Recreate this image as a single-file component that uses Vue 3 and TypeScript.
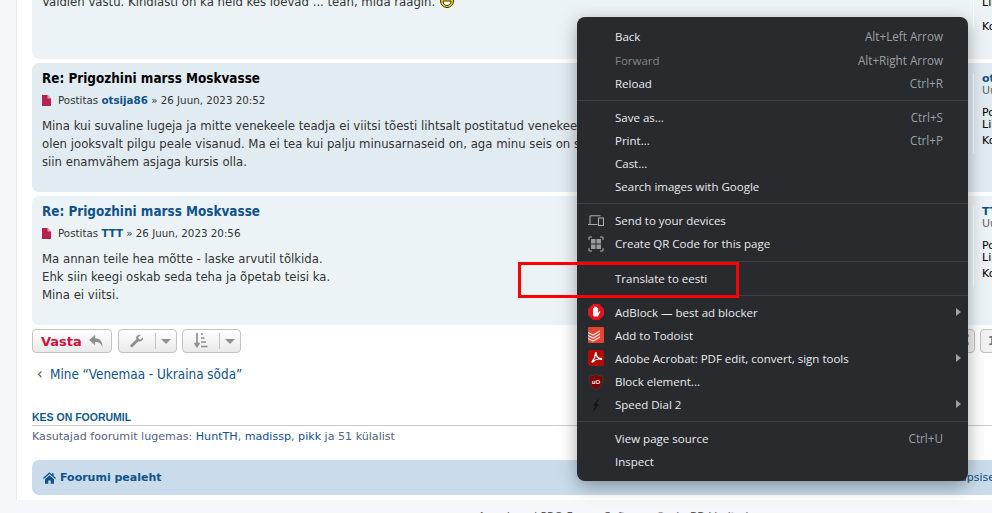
<script setup lang="ts">
interface Post { title: string; author: string; date: string; lines: string[]; dark: boolean; titleClass: string; rankName: string }
const posts: Post[] = [
  { title: 'Re: Prigozhini marss Moskvasse', author: 'otsija86', date: '26 Juun, 2023 20:52', dark: true, titleClass: 'black', rankName: 'otsija86',
    lines: ['Mina kui suvaline lugeja ja mitte venekeele teadja ei viitsi tõesti lihtsalt postitatud venekeelseid tekste lugeda, vaid', 'olen jooksvalt pilgu peale visanud. Ma ei tea kui palju minusarnaseid on, aga minu seis on selline, et mul on raske', 'siin enamvähem asjaga kursis olla.'] },
  { title: 'Re: Prigozhini marss Moskvasse', author: 'TTT', date: '26 Juun, 2023 20:56', dark: false, titleClass: 'blue', rankName: 'TTT',
    lines: ['Ma annan teile hea mõtte - laske arvutil tõlkida.', 'Ehk siin keegi oskab seda teha ja õpetab teisi ka.', 'Mina ei viitsi.'] },
]
interface Item { label?: string; key?: string; icon?: string; arrow?: boolean; disabled?: boolean; sep?: boolean }
const menu: Item[] = [
  { label: 'Back', key: 'Alt+Left Arrow' },
  { label: 'Forward', key: 'Alt+Right Arrow', disabled: true },
  { label: 'Reload', key: 'Ctrl+R' },
  { sep: true },
  { label: 'Save as...', key: 'Ctrl+S' },
  { label: 'Print...', key: 'Ctrl+P' },
  { label: 'Cast...' },
  { label: 'Search images with Google' },
  { sep: true },
  { label: 'Send to your devices', icon: 'devices' },
  { label: 'Create QR Code for this page', icon: 'qr' },
  { sep: true },
  { label: 'Translate to eesti' },
  { sep: true },
  { label: 'AdBlock — best ad blocker', icon: 'adblock', arrow: true },
  { label: 'Add to Todoist', icon: 'todoist' },
  { label: 'Adobe Acrobat: PDF edit, convert, sign tools', icon: 'acrobat', arrow: true },
  { label: 'Block element...', icon: 'ublock' },
  { label: 'Speed Dial 2', icon: 'speed', arrow: true },
  { sep: true },
  { label: 'View page source', key: 'Ctrl+U' },
  { label: 'Inspect' },
]
</script>

<template>
  <div class="page">
    <div class="wrap">
      <article class="post first">
        <div class="post-main">
          <p class="body-line">Valdlen vastu. Kindlasti on ka neid kes loevad ... tean, mida räägin.
            <svg class="smile" viewBox="0 0 16 16"><circle cx="8" cy="8" r="6.5" fill="#f6d32d" stroke="#3a3000"/><path d="M4 8h8c0 3-2 4.5-4 4.5S4 11 4 8z" fill="#fff" stroke="#3a3000"/></svg>
          </p>
        </div>
        <aside class="profile">
          <div class="pf">Lii</div>
          <div class="pf ko">Ko</div>
        </aside>
      </article>

      <article v-for="p in posts" :key="p.author" class="post" :class="{ dark: p.dark }">
        <div class="post-main">
          <h3 :class="p.titleClass">{{ p.title }}</h3>
          <div class="meta">
            <svg class="file" viewBox="0 0 9 11"><path d="M0 0h5.500L9 3.500V11H0z" fill="#b5234d"/><path d="M5.500 0v3.500H9z" fill="#e8a0b4"/></svg>
            <span>Postitas <b>{{ p.author }}</b> » {{ p.date }}</span>
          </div>
          <p v-for="l in p.lines" :key="l" class="body-line">{{ l }}</p>
        </div>
        <aside class="profile">
          <div class="pf name">{{ p.rankName }}</div>
          <div class="pf rank">Uu</div>
          <div class="pf po">Po</div>
          <div class="pf lii">Lii</div>
          <div class="pf ko">Ko</div>
        </aside>
      </article>

      <div class="actions">
        <div class="btn reply">
          <span>Vasta</span>
          <svg viewBox="0 0 16 14" width="15" height="13"><path d="M6.500 0 0 5.500 6.500 11V7.600c4 0 6.400 1 7.800 5.400.6-5.600-2.200-9.200-7.800-9.600z" fill="#8f8f8f"/></svg>
        </div>
        <div class="btn tool">
          <svg viewBox="0 0 14 14" width="14" height="14"><path d="M13 3.200 10.600 5.400 8.800 5 8.400 3.200 10.700 1C8.800.3 6.600 1.300 6.200 3.300c-.1.700 0 1.300.2 1.900L1 10.600c-.8.800-.8 1.600-.2 2.200s1.500.6 2.200-.1l5.400-5.400c2.600.7 5.400-1.400 4.600-4.100z" fill="#8f8f8f"/></svg>
          <i class="div"></i><i class="caret"></i>
        </div>
        <div class="btn tool">
          <svg viewBox="0 0 14 16" width="14" height="16"><path d="M3 0v12M.6 9.800 3 13.500 5.400 9.800" fill="none" stroke="#8f8f8f" stroke-width="1.700"/><path d="M7 1h2M7 5h3.500M7 9h5M7 13.500h6.500" stroke="#8f8f8f" stroke-width="1.500"/></svg>
          <i class="div"></i><i class="caret"></i>
        </div>
        <div class="pager">
          <div class="pg prev">‹</div>
          <div class="pg">1</div>
        </div>
      </div>

      <div class="jump"><span class="chev">‹</span>Mine “Venemaa - Ukraina sõda”</div>

      <h4 class="online-h">KES ON FOORUMIL</h4>
      <p class="online">Kasutajad foorumit lugemas: <a>HuntTH</a>, <a>madissp</a>, <a>pikk</a> ja 51 külalist</p>

      <nav class="navbar">
        <svg viewBox="0 0 16 14" width="13" height="12"><path d="M8 0 0 7l1 1.200L8 2.200l7 6L16 7l-3-2.600V1h-2v1.700zM2.500 8.500V14h4v-4h3v4h4V8.500L8 3.700z" fill="#105289"/></svg>
        <b>Foorumi pealeht</b>
        <span class="nav-right"><i class="sq"></i>Meeskond <i class="sq"></i>Liikmed <i class="sq"></i>Kustuta kõik foorumi küpsised</span>
      </nav>
      <p class="footer">Arendanud PRO Forum Software © phpBB Limited</p>
    </div>

    <div class="ctx">
      <template v-for="(m, i) in menu" :key="i">
        <div v-if="m.sep" class="sep"></div>
        <div v-else class="row" :class="{ off: m.disabled }">
          <span class="ic">
            <svg v-if="m.icon === 'devices'" viewBox="0 0 16 12" width="16" height="12"><path d="M2 .7h10.500M2 .7v8.300M0 9.500h9.500" fill="none" stroke="#a9abaf" stroke-width="1.100"/><rect x="10.500" y="3" width="5" height="7.500" fill="none" stroke="#a9abaf" stroke-width="1.100"/></svg>
            <svg v-else-if="m.icon === 'qr'" viewBox="0 0 16 16" width="16" height="16"><path d="M1 4V1h3M12 1h3v3M15 12v3h-3M4 15H1v-3" fill="none" stroke="#a9abaf"/><rect x="3" y="3" width="4.500" height="4.500" fill="#9a9b9e"/><rect x="8.500" y="3" width="4.500" height="4.500" fill="#9a9b9e"/><rect x="3" y="8.500" width="4.500" height="4.500" fill="#9a9b9e"/><rect x="8.500" y="8.500" width="4.500" height="4.500" fill="#9a9b9e"/></svg>
            <svg v-else-if="m.icon === 'adblock'" viewBox="0 0 16 16" width="16" height="16"><path d="M5 0h6l5 5v6l-5 5H5l-5-5V5z" fill="#e4131b"/><path d="M5 8V4.500c0-1 1.300-1 1.300 0V3c0-1 1.300-1 1.300 0v.500c0-1 1.300-1 1.300 0V4.500c0-1 1.200-1 1.200 0V9l1-1.500c.6-.8 1.600 0 1 .7L10 12.500H6.500C5.200 12.500 5 11 5 10z" fill="#fff"/></svg>
            <svg v-else-if="m.icon === 'todoist'" viewBox="0 0 16 16" width="16" height="16"><rect width="16" height="16" rx="1" fill="#e44332"/><path d="M0 5.500 5 8l7-4M0 8.500 5 11l7-4M0 11.500 5 14l7-4" fill="none" stroke="#fff" stroke-width="1.200" opacity=".9"/></svg>
            <svg v-else-if="m.icon === 'acrobat'" viewBox="0 0 16 16" width="16" height="16"><rect width="16" height="16" rx="2" fill="#b30b00"/><path d="M7.500 3c-.5 1.500.5 4-3 8-1 1 0 1.500.8.500 1.500-1.500 5-3 7.700-2.200.8.200.8-.8-.2-.8-3.600 0-4.600-3-4.800-5.500z" fill="none" stroke="#fff" stroke-width="1.300"/></svg>
            <svg v-else-if="m.icon === 'ublock'" viewBox="0 0 16 16" width="16" height="16"><path d="M8 .5 15 2.500c0 7-1.500 10.500-7 13C2.500 13 1 9.500 1 2.500z" fill="#800000" stroke="#3c3c3c"/><text x="8" y="10" text-anchor="middle" font-size="6" font-weight="700" fill="#fff" font-family="Liberation Sans">uO</text></svg>
            <svg v-else-if="m.icon === 'speed'" viewBox="0 0 16 16" width="16" height="16"><path d="M11 1 5 8.500h2.500L5 15l6-8H8.500z" fill="#111214"/></svg>
          </span>
          <span class="lb">{{ m.label }}</span>
          <span v-if="m.key" class="key">{{ m.key }}</span>
          <i v-if="m.arrow" class="arrow"></i>
        </div>
      </template>
    </div>

    <div class="redbox"></div>
  </div>
</template>

<style>
html, body { margin: 0; background: #f5f7fa; }
</style>

<style scoped>
.page { position: relative; width: 992px; height: 513px; overflow: hidden; background: #f5f7fa; font-family: "DejaVu Sans Condensed", "DejaVu Sans", sans-serif; }
.wrap { margin-left: 16px; width: 1100px; height: 513px; background: #fff; border-left: 1px solid #e6e9ed; padding-left: 15px; box-sizing: border-box; }
.post { display: flex; width: 1000px; margin-bottom: 4px; border-radius: 7px; background: #ecf3f7; color: #333; box-sizing: border-box; height: 129px; padding: 6px 0 0 10px; }
.post.first { height: 72px; margin-top: -13px; padding-top: 6px; }
.post.dark { background: #e1ebf2; }
.post-main { width: 931px; flex: none; }
.post h3 { margin: 0; font: bold 13.400px/20px "DejaVu Sans Condensed", sans-serif; }
.black { color: #000; }
.blue { color: #105289; }
.meta { display: flex; align-items: center; gap: 7px; margin: 1px 0 7px; height: 20px; font: 10.300px/20px "DejaVu Sans", sans-serif; color: #333; }
.meta b { color: #105289; }
.file { width: 9px; height: 11px; }
.body-line { margin: 0; font-size: 13px; line-height: 18px; color: #333; white-space: nowrap; }
.smile { width: 16px; height: 16px; vertical-align: -3px; }
.profile { border-left: 1px solid #fff; padding-left: 8px; margin-top: 4px; height: 80px; font: 11px/12px "DejaVu Sans", sans-serif; color: #000; white-space: nowrap; }
.first .profile { height: 31px; margin-top: 4px; }
.pf.name { color: #105289; font-weight: 700; }
.pf.rank { color: #666; }
.pf.po { margin-top: 10px; }
.pf.ko { margin-top: 4px; }
.first .pf.ko { margin-top: 12px; }
.actions { display: flex; height: 24px; width: 972px; }
.btn { display: flex; align-items: center; box-sizing: border-box; height: 24px; border: 1px solid #c7c3bf; border-radius: 4px; background: linear-gradient(#fff, #e9e9e9); margin-right: 5px; }
.reply { width: 80px; padding-left: 8px; gap: 7px; margin-right: 6px; font: bold 13px "DejaVu Sans", sans-serif; color: #d31141; }
.tool { width: 59px; padding-left: 11px; }
.div { width: 1px; height: 16px; background: #c7c3bf; margin-left: 11px; }
.caret { margin-left: 5px; border: 5px solid transparent; border-top: 5px solid #8f8f8f; border-bottom: 0; }
.pager { margin-left: auto; display: flex; gap: 5px; }
.pg { width: 24px; height: 24px; box-sizing: border-box; border: 1px solid #c7c3bf; border-radius: 4px; background: #f2f2f2; text-align: center; font: bold 12px/22px "DejaVu Sans", sans-serif; color: #5c758c; }
.pg.prev { font-size: 24px; line-height: 18px; padding-left: 6px; color: #777; }
.jump { margin: 12px 0 0 5px; height: 18px; font: 13.400px/18px "DejaVu Sans Condensed", sans-serif; color: #105289; }
.chev { display: inline-block; width: 13px; font-size: 16px; color: #555; }
.online-h { margin: 28px 0 0; height: 13px; font: bold 10.500px/13px "Liberation Sans", sans-serif; color: #115a8e; border-bottom: 1px solid #ccc; padding-bottom: 1px; width: 972px; }
.online { margin: 4px 0 0; height: 14px; font: 11.100px/14px "DejaVu Sans", sans-serif; color: #536482; }
.online a { color: #105289; }
.navbar { display: flex; align-items: center; gap: 4px; margin-top: 16px; height: 35px; width: 1000px; box-sizing: border-box; padding-left: 11px; background: #cadceb; border-radius: 7px; font: 11px "DejaVu Sans", sans-serif; color: #105289; }
.nav-right { margin-left: auto; padding-right: 30px; white-space: nowrap; }
.sq { display: inline-block; width: 9px; height: 9px; background: #105289; margin: 0 3px 0 6px; }
.footer { margin: 15px 0 0 446px; white-space: nowrap; font: 10.800px/14px "DejaVu Sans", sans-serif; color: #555; }
.ctx { position: absolute; left: 577px; top: 17px; width: 391px; height: 464px; box-sizing: border-box; padding: 8.400px 0; background: #292a2d; border-radius: 8px; box-shadow: 0 5px 18px rgba(0,0,0,.35); font: 11.500px/23px "Open Sans", sans-serif; color: #e8eaed; }
.row { display: flex; align-items: center; height: 23.125px; padding-right: 25px; position: relative; }
.row.off .lb { color: #80868b; }
.ic { width: 38px; display: flex; justify-content: center; box-sizing: border-box; padding: 0 2px; }
.lb { flex: 1; white-space: nowrap; }
.key { color: #9aa0a6; font-size: 11.700px; }
.arrow { position: absolute; right: 7px; top: 7px; border: 4px solid transparent; border-left: 5px solid #9aa0a6; border-right: 0; }
.sep { height: 1px; background: #3f4042; margin: 5px 0; }
.redbox { position: absolute; left: 518px; top: 262px; width: 221px; height: 36px; box-sizing: border-box; border: 3px solid #f00; }
</style>
